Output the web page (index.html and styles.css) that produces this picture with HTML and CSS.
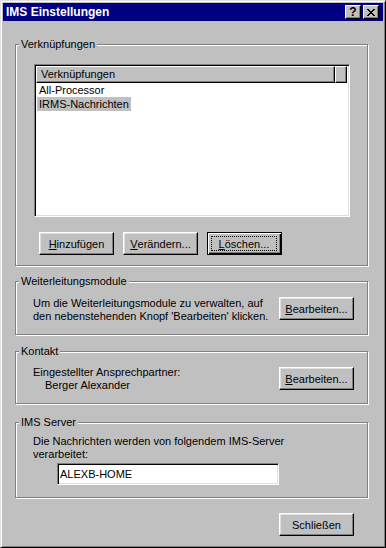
FILE: index.html
```html
<!DOCTYPE html>
<html lang="de">
<head>
<meta charset="UTF-8">
<title>IMS Einstellungen</title>
<link rel="stylesheet" href="styles.css">
</head>
<body>
<div class="window">
    <div class="titlebar">
        <span class="title">IMS Einstellungen</span>
        <div class="title-buttons">
            <span class="tbtn help">?</span>
            <span class="tbtn close">
                <svg width="8" height="7" viewBox="0 0 8 7"><path d="M0 0h2v1H0z M6 0h2v1H6z M1 1h2v1H1z M5 1h2v1H5z M2 2h4v1H2z M3 3h2v1H3z M2 4h4v1H2z M1 5h2v1H1z M5 5h2v1H5z M0 6h2v1H0z M6 6h2v1H6z" fill="#000"/></svg>
            </span>
        </div>
    </div>

    <div class="client">
        <!-- Verknuepfungen -->
        <div class="group g-links">
            <span class="group-label">Verknüpfungen</span>
            <div class="listview">
                <div class="lv-header">
                    <span class="lv-col first">Verknüpfungen</span>
                    <span class="lv-col rest"></span>
                </div>
                <div class="lv-row"><span class="item">All-Processor</span></div>
                <div class="lv-row"><span class="item selected">IRMS-Nachrichten</span></div>
            </div>
            <div class="btn-row">
                <button class="btn"><u>H</u>inzufügen</button>
                <button class="btn"><u>V</u>erändern...</button>
                <button class="btn default"><span class="focus"><u>L</u>öschen...</span></button>
            </div>
        </div>

        <!-- Weiterleitungsmodule -->
        <div class="group g-modules">
            <span class="group-label">Weiterleitungsmodule</span>
            <p class="group-text">Um die Weiterleitungsmodule zu verwalten, auf<br>den nebenstehenden Knopf 'Bearbeiten' klicken.</p>
            <button class="btn"><u>B</u>earbeiten...</button>
        </div>

        <!-- Kontakt -->
        <div class="group g-contact">
            <span class="group-label">Kontakt</span>
            <div class="group-text">
                <div>Eingestellter Ansprechpartner:</div>
                <div class="indent">Berger Alexander</div>
            </div>
            <button class="btn"><u>B</u>earbeiten...</button>
        </div>

        <!-- IMS Server -->
        <div class="group g-server">
            <span class="group-label">IMS Server</span>
            <p class="group-text">Die Nachrichten werden von folgendem IMS-Server<br>verarbeitet:</p>
            <div class="field">ALEXB-HOME</div>
        </div>

        <div class="footer">
            <button class="btn">Schließen</button>
        </div>
    </div>
</div>
</body>
</html>
```

FILE: styles.css
```css
body {
    margin: 0;
    background: #c0c0c0;
    font-family: "Liberation Sans", Arial, sans-serif;
    font-size: 11px;
    color: #000;
}

.window {
    width: 386px;
    height: 548px;
    box-sizing: border-box;
    background: #c0c0c0;
    border: 1px solid;
    border-color: #dfdfdf #000 #000 #dfdfdf;
    box-shadow: inset 1px 1px #fff, inset -1px -1px #808080;
    padding: 2px;
}

/* title bar */
.titlebar {
    height: 18px;
    background: #000080;
    display: flex;
    align-items: center;
    justify-content: space-between;
    padding: 0 4px 0 3px;
}

.title {
    color: #fff;
    font-weight: bold;
    font-size: 12px;
}

.title-buttons {
    display: flex;
    gap: 2px;
}

.tbtn {
    width: 16px;
    height: 14px;
    box-sizing: border-box;
    background: #c0c0c0;
    border: 1px solid;
    border-color: #fff #000 #000 #fff;
    box-shadow: inset -1px -1px #808080;
    display: flex;
    align-items: center;
    justify-content: center;
    font-weight: bold;
    font-size: 12px;
    line-height: 1;
}

/* client area */
.client {
    padding: 23px 15px 0 12px;
}

.group {
    position: relative;
    box-sizing: border-box;
    border: 1px solid #808080;
    box-shadow: inset 1px 1px #fff, 1px 1px #fff;
}

.group-label {
    position: absolute;
    top: -7px;
    left: 3px;
    padding: 0 2px;
    line-height: 13px;
    background: #c0c0c0;
}

.group-text {
    margin: 0;
    line-height: 13px;
}

.g-links {
    height: 222px;
    padding: 19px 0 0 18px;
}

.listview {
    width: 316px;
    height: 153px;
    box-sizing: border-box;
    background: #fff;
    border: 1px solid;
    border-color: #808080 #fff #fff #808080;
    box-shadow: inset 1px 1px #000, inset -1px -1px #dfdfdf;
    padding: 1px 2px 2px 1px;
}

.lv-header {
    display: flex;
    height: 17px;
}

.lv-col {
    box-sizing: border-box;
    background: #c0c0c0;
    border: 1px solid;
    border-color: #fff #000 #000 #fff;
    box-shadow: inset -1px -1px #808080;
    line-height: 14px;
}

.lv-col.first {
    width: 299px;
    padding-left: 4px;
}

.lv-col.rest {
    flex: 1;
}

.lv-row {
    height: 14px;
    line-height: 14px;
    padding-left: 1px;
}

.item {
    display: inline-block;
    padding: 0 2px;
}

.item.selected {
    background: #c0c0c0;
}

.btn-row {
    display: flex;
    gap: 9px;
    margin-top: 15px;
    padding-left: 5px;
}

.btn {
    width: 75px;
    height: 23px;
    box-sizing: border-box;
    padding: 0;
    margin: 0;
    background: #c0c0c0;
    font-family: inherit;
    font-size: 11px;
    color: #000;
    border: 1px solid;
    border-color: #fff #000 #000 #fff;
    box-shadow: inset -1px -1px #808080, inset 1px 1px #dfdfdf;
    display: flex;
    align-items: center;
    justify-content: center;
    flex-shrink: 0;
}

.btn.default {
    border-color: #000;
    box-shadow: inset 1px 1px #fff, inset -1px -1px #000, inset -2px -2px #808080;
    align-items: stretch;
}

.focus {
    flex: 1;
    margin: 3px 4px 3px 3px;
    border: 1px dotted #000;
    display: flex;
    align-items: center;
    justify-content: center;
}

.g-modules {
    margin-top: 15px;
    height: 54px;
    display: flex;
    justify-content: space-between;
    align-items: flex-start;
    padding: 15px 13px 0 17px;
}

.g-contact {
    margin-top: 16px;
    height: 53px;
    display: flex;
    justify-content: space-between;
    align-items: flex-start;
    padding: 14px 13px 0 17px;
}

.g-contact .btn {
    margin-top: 1px;
}

.indent {
    padding-left: 12px;
}

.g-server {
    margin-top: 18px;
    height: 76px;
    padding: 12px 13px 0 17px;
}

.field {
    width: 222px;
    height: 22px;
    box-sizing: border-box;
    margin: 2px 0 0 24px;
    background: #fff;
    border: 1px solid;
    border-color: #808080 #fff #fff #808080;
    box-shadow: inset 1px 1px #000, inset -1px -1px #dfdfdf;
    padding: 0 0 0 2px;
    line-height: 20px;
}

.footer {
    display: flex;
    justify-content: flex-end;
    margin-top: 15px;
    padding-right: 14px;
}
```
